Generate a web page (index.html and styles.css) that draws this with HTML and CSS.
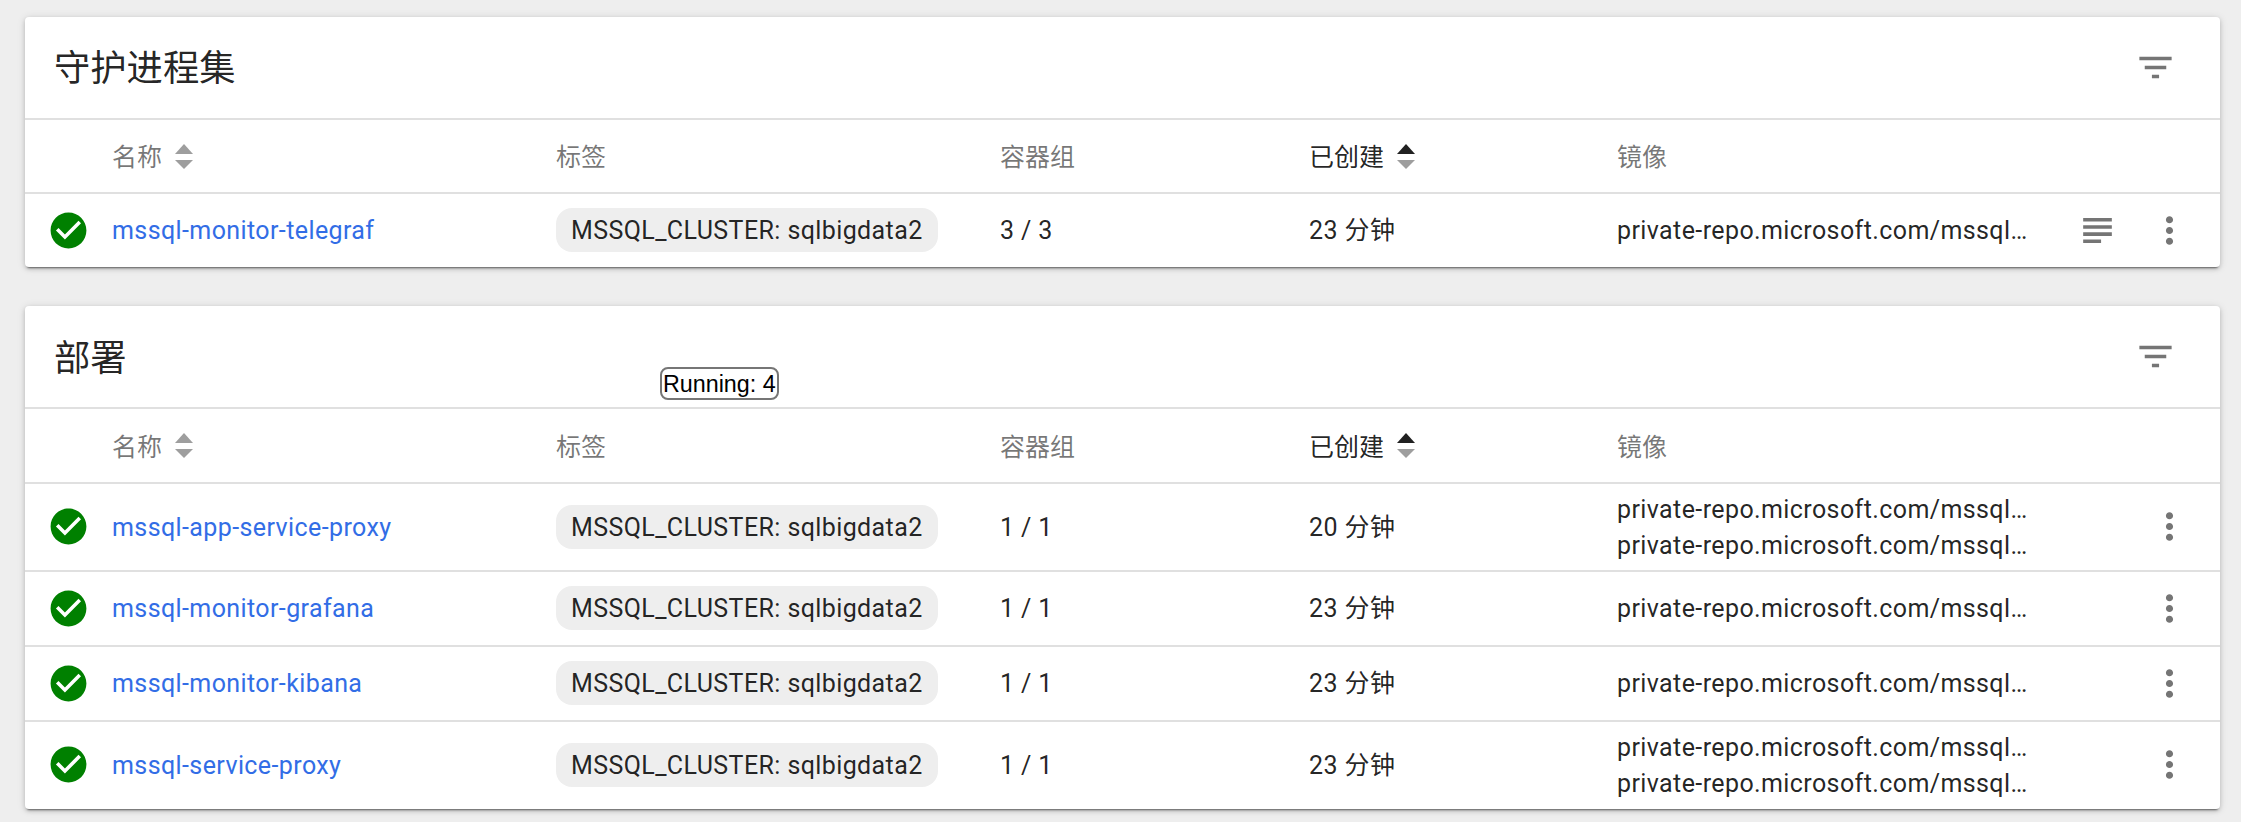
FILE: index.html
```html
<!DOCTYPE html>
<html lang="zh">
<head>
<meta charset="utf-8">
<title>工作负载</title>
<link rel="stylesheet" href="styles.css">
</head>
<body>
<svg class="defs" width="0" height="0" aria-hidden="true">
  <defs>
    <symbol id="i-check" viewBox="0 0 24 24"><path d="M12 2C6.48 2 2 6.48 2 12s4.48 10 10 10 10-4.48 10-10S17.52 2 12 2zm-2 15l-5-5 1.41-1.41L10 14.17l7.59-7.59L19 8l-9 9z"/></symbol>
    <symbol id="i-filter" viewBox="0 0 24 24"><path d="M10 18h4v-2h-4v2zM3 6v2h18V6H3zm3 7h12v-2H6v2z"/></symbol>
    <symbol id="i-subject" viewBox="0 0 24 24"><path d="M14 17H4v2h10v-2zm6-8H4v2h16V9zM4 15h16v-2H4v2zM4 5v2h16V5H4z"/></symbol>
    <symbol id="i-more" viewBox="0 0 24 24"><path d="M12 8c1.1 0 2-.9 2-2s-.9-2-2-2-2 .9-2 2 .9 2 2 2zm0 2c-1.1 0-2 .9-2 2s.9 2 2 2 2-.9 2-2-.9-2-2-2zm0 6c-1.1 0-2 .9-2 2s.9 2 2 2 2-.9 2-2-.9-2-2-2z"/></symbol>
  </defs>
</svg>

<main class="page">
  <section class="card">
    <header class="card-title">
      <h2>守护进程集</h2>
      <svg class="icon"><use href="#i-filter"/></svg>
    </header>
    <div class="row head">
      <span></span>
      <span class="th">名称 <svg class="sort" viewBox="0 0 18 25"><polygon class="off" points="9,0 18,10 0,10"/><polygon class="off" points="0,16 18,16 9,25"/></svg></span>
      <span class="th">标签</span>
      <span class="th">容器组</span>
      <span class="th active">已创建 <svg class="sort" viewBox="0 0 18 25"><polygon class="on" points="9,0 18,10 0,10"/><polygon class="off" points="0,16 18,16 9,25"/></svg></span>
      <span class="th">镜像</span>
      <span></span>
    </div>
    <div class="row">
      <svg class="status"><use href="#i-check"/></svg>
      <a class="name" href="#">mssql-monitor-telegraf</a>
      <div><span class="chip">MSSQL_CLUSTER: sqlbigdata2</span></div>
      <span class="cell">3 / 3</span>
      <span class="cell">23 分钟</span>
      <div class="images"><div class="image">private-repo.microsoft.com/mssql-monitor-telegraf:latest</div></div>
      <div class="actions"><svg class="icon"><use href="#i-subject"/></svg><svg class="icon"><use href="#i-more"/></svg></div>
    </div>
  </section>

  <section class="card">
    <header class="card-title">
      <h2>部署</h2>
      <svg class="icon"><use href="#i-filter"/></svg>
    </header>
    <div class="tooltip">Running: 4</div>
    <div class="row head">
      <span></span>
      <span class="th">名称 <svg class="sort" viewBox="0 0 18 25"><polygon class="off" points="9,0 18,10 0,10"/><polygon class="off" points="0,16 18,16 9,25"/></svg></span>
      <span class="th">标签</span>
      <span class="th">容器组</span>
      <span class="th active">已创建 <svg class="sort" viewBox="0 0 18 25"><polygon class="on" points="9,0 18,10 0,10"/><polygon class="off" points="0,16 18,16 9,25"/></svg></span>
      <span class="th">镜像</span>
      <span></span>
    </div>
    <div class="row">
      <svg class="status"><use href="#i-check"/></svg>
      <a class="name" href="#">mssql-app-service-proxy</a>
      <div><span class="chip">MSSQL_CLUSTER: sqlbigdata2</span></div>
      <span class="cell">1 / 1</span>
      <span class="cell">20 分钟</span>
      <div class="images"><div class="image">private-repo.microsoft.com/mssql-app-service-proxy:latest</div><div class="image">private-repo.microsoft.com/mssql-monitor-collectd:latest</div></div>
      <div class="actions"><svg class="icon"><use href="#i-more"/></svg></div>
    </div>
    <div class="row">
      <svg class="status"><use href="#i-check"/></svg>
      <a class="name" href="#">mssql-monitor-grafana</a>
      <div><span class="chip">MSSQL_CLUSTER: sqlbigdata2</span></div>
      <span class="cell">1 / 1</span>
      <span class="cell">23 分钟</span>
      <div class="images"><div class="image">private-repo.microsoft.com/mssql-monitor-grafana:latest</div></div>
      <div class="actions"><svg class="icon"><use href="#i-more"/></svg></div>
    </div>
    <div class="row">
      <svg class="status"><use href="#i-check"/></svg>
      <a class="name" href="#">mssql-monitor-kibana</a>
      <div><span class="chip">MSSQL_CLUSTER: sqlbigdata2</span></div>
      <span class="cell">1 / 1</span>
      <span class="cell">23 分钟</span>
      <div class="images"><div class="image">private-repo.microsoft.com/mssql-monitor-kibana:latest</div></div>
      <div class="actions"><svg class="icon"><use href="#i-more"/></svg></div>
    </div>
    <div class="row">
      <svg class="status"><use href="#i-check"/></svg>
      <a class="name" href="#">mssql-service-proxy</a>
      <div><span class="chip">MSSQL_CLUSTER: sqlbigdata2</span></div>
      <span class="cell">1 / 1</span>
      <span class="cell">23 分钟</span>
      <div class="images"><div class="image">private-repo.microsoft.com/mssql-service-proxy:latest</div><div class="image">private-repo.microsoft.com/mssql-monitor-collectd:latest</div></div>
      <div class="actions"><svg class="icon"><use href="#i-more"/></svg></div>
    </div>
  </section>
</main>
</body>
</html>
```

FILE: styles.css
```css
* { box-sizing: border-box; }

html, body { margin: 0; height: 100%; }

body {
  background: #eeeeee;
  color: rgba(0, 0, 0, .87);
  font-family: Roboto, "Noto Sans CJK SC", sans-serif;
  font-size: 25px;
  line-height: 36px;
  overflow: hidden;
}

.defs { position: absolute; }

.page {
  display: flex;
  flex-direction: column;
  gap: 38.6px;
  padding: 16.8px 21px 0 25px;
}

.card {
  position: relative;
  background: #fff;
  border-radius: 4px;
  box-shadow: 0 3px 2px -2px rgba(0,0,0,.5), 0 2px 4px 0 rgba(0,0,0,.16), 0 1px 9px 0 rgba(0,0,0,.12);
}

.card-title {
  display: flex;
  align-items: center;
  justify-content: space-between;
  height: 103.4px;
  padding: 0 43.5px 0 29px;
  border-bottom: 2px solid #e0e0e0;
}

.card-title h2 {
  margin: 0;
  padding-top: 4px;
  font-size: 36.3px;
  font-weight: 400;
}

.icon {
  width: 43px;
  height: 43px;
  fill: #757575;
  flex: none;
}

.row {
  display: grid;
  grid-template-columns: 87px 444px 444px 309px 308px 429px 174px;
  align-items: center;
  min-height: 74.9px;
  padding: 6px 0;
  border-bottom: 2px solid #e0e0e0;
  letter-spacing: .4px;
}

.row.head {
  min-height: 74.3px;
  letter-spacing: 0;
}

.row:last-child {
  min-height: 73px;
  border-bottom: 0;
  padding-bottom: 7px;
}

.th {
  display: flex;
  align-items: center;
  gap: 13px;
  padding-top: 4px;
  color: rgba(0, 0, 0, .54);
}

.th.active { color: rgba(0, 0, 0, .87); }

.sort {
  width: 18px;
  height: 25px;
  margin-top: -4px;
}
.sort .off { fill: #9e9e9e; }
.sort .on { fill: #212121; }

.status {
  width: 43px;
  height: 43px;
  margin-left: 22px;
  fill: #008000;
}

.cell { padding-top: 2px; }

.name {
  padding-top: 2px;
  color: #326de6;
  text-decoration: none;
}

.chip {
  display: inline-flex;
  align-items: center;
  height: 44px;
  padding: 2px 15px 0;
  background: #eeeeee;
  border-radius: 16px;
  vertical-align: middle;
  white-space: nowrap;
}

.images {
  min-width: 0;
  padding-top: 2px;
}

.image {
  width: 412px;
  white-space: nowrap;
  overflow: hidden;
  text-overflow: ellipsis;
}

.actions {
  display: flex;
  justify-content: flex-end;
  gap: 29px;
  padding-right: 29.5px;
}

.tooltip {
  position: absolute;
  left: 635px;
  top: 61px;
  padding: 0 1px;
  height: 33px;
  line-height: 30px;
  background: #fff;
  border: 2px solid #767676;
  border-radius: 8px;
  color: #000;
  font-family: "Liberation Sans", sans-serif;
  font-size: 23.3px;
  white-space: nowrap;
}
```
